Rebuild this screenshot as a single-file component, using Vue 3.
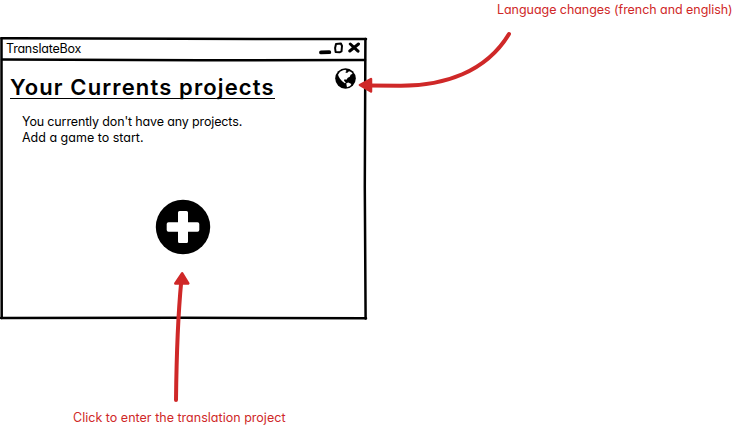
<script setup>
const title = 'TranslateBox'
</script>

<template>
  <main class="board">
    <p class="note note-language"><span>Language changes (french and english)</span></p>

    <section class="window">
      <svg class="frame" viewBox="0 0 368 284" aria-hidden="true">
        <path d="M1.5 1.2 L180 1.8 L366 2" />
        <path d="M2 22.5 L200 23.3 L365 23" />
        <path d="M1.5 1 L1.7 281" />
        <path d="M365.4 2 L364.8 150 L365.6 281.5" />
        <path d="M1 281 L180 280.8 L366 281.3" />
      </svg>
      <header class="titlebar">
        <span class="title">{{ title }}</span>
        <svg class="controls" viewBox="0 0 42 14" aria-hidden="true">
          <path d="M2 10.4 L10.3 10.2" stroke-width="3.8" />
          <path d="M17 2 L22 1.6 L23 4 L22.5 9.4 L20.6 10.3 L16.6 10 L16.1 6 Z" stroke-width="2" />
          <path d="M31.3 2 L39 9.2 M39.5 2 L30.8 9" stroke-width="3" />
        </svg>
      </header>
      <div class="heading-row">
        <h1 class="heading">Your Currents projects</h1>
        <svg class="globe" viewBox="0 0 21 21" aria-hidden="true">
          <circle cx="10.5" cy="10.5" r="10.3" />
          <path class="land" d="M3 6.8 L5 3.8 L8 2.2 L10.4 1.8 L11.6 3 L10.2 4.2 L12 4.9 L14 3.2 L16.2 4 L17.6 5.8 L15.6 6.8 L14.8 8.8 L12.8 9.8 L11.4 11.8 L9.6 11.2 L9 12.8 L10.8 14.6 L9.8 15.2 L7.2 13.2 L5 10.8 L3.8 8.8 Z M11.3 15.3 L13.3 14.6 L16.4 16 L15.2 18 L12 19.3 L11.6 17.4 Z" />
        </svg>
      </div>
      <div class="message">
        <p>You currently don't have any projects.</p>
        <p class="hint">Add a game to start.</p>
      </div>
      <svg class="add" viewBox="0 0 56 56" aria-hidden="true">
        <circle cx="28" cy="28" r="27.2" />
        <path class="plus" d="M24.5 12 H31.5 Q33 12 33 13.5 V23.2 H42.5 Q44.3 23.2 44.3 25 V31 Q44.3 32.8 42.5 32.8 H33 V42.5 Q33 44 31.5 44 H24.5 Q23 44 23 42.5 V32.8 H13.5 Q11.7 32.8 11.7 31 V25 Q11.7 23.2 13.5 23.2 H23 V13.5 Q23 12 24.5 12 Z" />
      </svg>
    </section>

    <p class="note note-add"><span>Click to enter the translation project</span></p>

    <svg class="arrows" viewBox="0 0 733 429" aria-hidden="true">
      <path class="shaft" d="M509 34 C486 72 444 86 400 85.8 L368 85.4" />
      <path class="head" d="M359.9 85 L371 79 V91.5 Z" />
      <path class="shaft" d="M176 400 C176.5 355 178 315 181.3 281" />
      <path class="head" d="M182.2 273.3 L188.3 283.5 L175.3 283.5 Z" />
    </svg>
  </main>
</template>

<style>
body {
  background: #fff;
}
</style>

<style scoped>
.board {
  position: relative;
  width: 733px;
  height: 429px;
  display: flex;
  flex-direction: column;
  overflow: hidden;
  font-family: Inter, "Liberation Sans", sans-serif;
  font-feature-settings: "cv11" 1, "ss03" 1;
  font-size: 12.5px;
  color: #000;
}
p, h1 {
  margin: 0;
}
.note {
  color: #cf2828;
  line-height: 20px;
  white-space: nowrap;
}
.note-language {
  height: 37px;
  padding-left: 497px;
  letter-spacing: -0.05px;
}
.note-add {
  margin-top: 87px;
  padding-left: 73px;
  letter-spacing: 0.02px;
}
.window {
  position: relative;
  flex: none;
  width: 368px;
  height: 284px;
  display: flex;
  flex-direction: column;
}
.frame {
  position: absolute;
  inset: 0;
  width: 368px;
  height: 284px;
  fill: none;
  stroke: #000;
  stroke-width: 2.5;
  stroke-linecap: round;
}
.titlebar {
  height: 23px;
  display: flex;
  justify-content: space-between;
  padding: 0 7px 0 6px;
}
.title {
  line-height: 23px;
  letter-spacing: -0.22px;
}
.controls {
  width: 42px;
  height: 14px;
  margin-top: 5px;
  fill: none;
  stroke: #000;
  stroke-linecap: round;
  stroke-linejoin: round;
}
.heading-row {
  display: flex;
  justify-content: space-between;
  align-items: flex-start;
  padding: 8px 12px 0 10px;
}
.heading {
  height: 30px;
  box-sizing: border-box;
  border-bottom: 1px solid #000;
  margin-top: 1px;
  font-size: 22px;
  font-weight: 600;
  line-height: 36px;
  letter-spacing: 1.13px;
  white-space: nowrap;
}
.globe {
  width: 21px;
  height: 21px;
}
.land {
  fill: #fff;
}
.message {
  padding: 15px 0 0 22px;
  line-height: 16px;
  letter-spacing: -0.14px;
}
.hint {
  letter-spacing: 0;
}
.add {
  width: 56px;
  height: 56px;
  margin: 53px 0 0 155px;
}
.plus {
  fill: #fff;
}
.arrows {
  position: absolute;
  inset: 0;
  width: 733px;
  height: 429px;
  pointer-events: none;
}
.shaft {
  fill: none;
  stroke: #cf2828;
  stroke-width: 4;
  stroke-linecap: round;
}
.head {
  fill: #cf2828;
  stroke: #cf2828;
  stroke-width: 2.5;
  stroke-linejoin: round;
}
</style>
